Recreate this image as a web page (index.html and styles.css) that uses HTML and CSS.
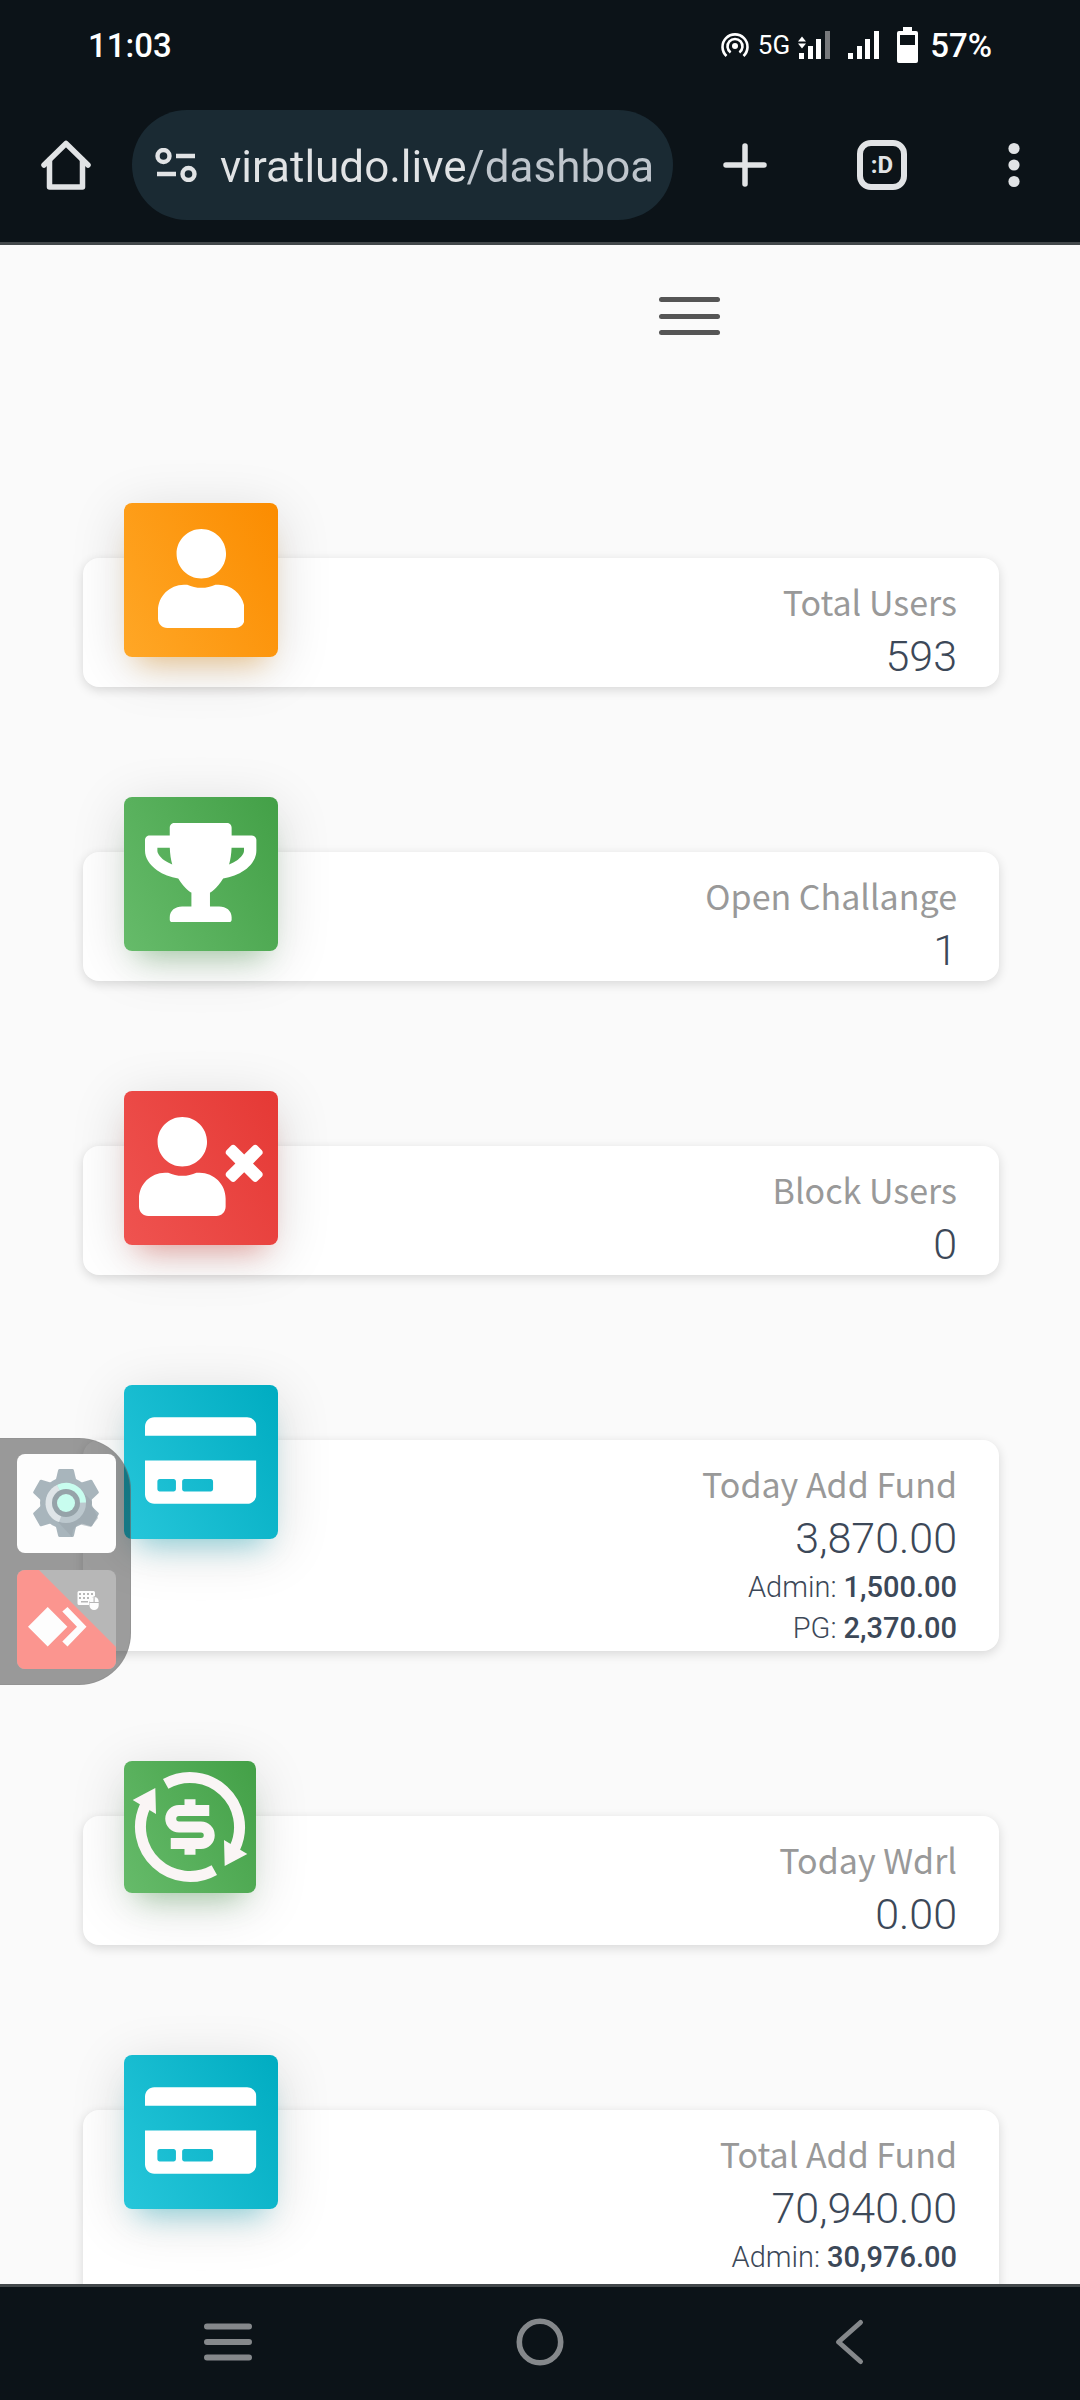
FILE: index.html
```html
<!DOCTYPE html>
<html lang="en">
<head>
<meta charset="utf-8">
<meta name="viewport" content="width=device-width, initial-scale=1">
<title>Dashboard</title>
<link rel="stylesheet" href="styles.css">
</head>
<body>
<svg class="sprite" aria-hidden="true">
  <symbol id="i-card" viewBox="0 0 576 512"><path d="M0 432c0 26.500 21.500 48 48 48h480c26.500 0 48-21.500 48-48V256H0v176zm192-68c0-6.600 5.400-12 12-12h136c6.600 0 12 5.400 12 12v40c0 6.600-5.400 12-12 12H204c-6.600 0-12-5.400-12-12v-40zm-128 0c0-6.600 5.400-12 12-12h72c6.600 0 12 5.400 12 12v40c0 6.600-5.400 12-12 12H76c-6.600 0-12-5.400-12-12v-40zM576 80v48H0V80c0-26.500 21.500-48 48-48h480c26.500 0 48 21.500 48 48z"/></symbol>
</svg>

<header class="status">
  <time class="status-clock">11:03</time>
  <div class="status-icons">
    <svg class="ic-hotspot" viewBox="0 0 28 26" fill="none" stroke="#fff" stroke-width="2.600"><circle cx="14" cy="14" r="3" fill="#fff" stroke="none"/><path d="M9.600 20.500a7.500 7.500 0 1 1 8.800 0M5.500 24a12.500 12.500 0 1 1 17 0"/></svg>
    <span class="status-net">5G</span>
    <svg class="ic-signal-one" viewBox="0 0 32 28" fill="#fff"><path d="M0 10.500l4-5 4 5zM0 12.500h8l-4 5z"/><path d="M1 22h5v6H1zM10 15h5v13h-5zM18 8h5v20h-5z"/><path fill="#77797c" d="M27 0h5v28h-5z"/></svg>
    <svg class="ic-signal-two" viewBox="0 0 31 28" fill="#fff"><path d="M0 22h5v6H0zM9 15h5v13H9zM17 8h5v20h-5zM26 0h5v28h-5z"/></svg>
    <svg class="ic-battery" viewBox="0 0 21 36"><path fill="#fff" fill-rule="evenodd" d="M6 0h9v4h4a2 2 0 0 1 2 2v28a2 2 0 0 1-2 2H2a2 2 0 0 1-2-2V6a2 2 0 0 1 2-2h4zM3 8v10h15V8z"/></svg>
    <span class="status-battery">57%</span>
  </div>
</header>

<nav class="toolbar" aria-label="Browser">
  <button class="tool tool-home" type="button" aria-label="Home">
    <svg viewBox="0 0 50 50" fill="none" stroke="#e1e3e5" stroke-width="5.500" stroke-linecap="round" stroke-linejoin="round"><path d="M3 25L25 3.500L47 25"/><path d="M8.500 20v27h33V20"/></svg>
  </button>
  <div class="omnibox">
    <svg class="ic-site" viewBox="0 0 42 34" fill="none" stroke="#e1e3e5" stroke-width="4.400"><circle cx="8.500" cy="8" r="6"/><path d="M21 8h19M2 26h19"/><circle cx="33.500" cy="26" r="6"/></svg>
    <input class="url" type="text" aria-label="Address" value="viratludo.live/dashboard">
  </div>
  <button class="tool tool-new" type="button" aria-label="New tab">
    <svg viewBox="0 0 50 50" fill="none" stroke="#e1e3e5" stroke-width="5.500" stroke-linecap="round"><path d="M25 6v38M6 25h38"/></svg>
  </button>
  <button class="tool tool-tabs" type="button" aria-label="Tabs"><span class="tab-count">:D</span></button>
  <button class="tool tool-more" type="button" aria-label="More">
    <svg viewBox="0 0 50 50" fill="#e1e3e5"><circle cx="25" cy="8.500" r="5.600"/><circle cx="25" cy="25" r="5.600"/><circle cx="25" cy="41.500" r="5.600"/></svg>
  </button>
</nav>

<main class="page">
  <div class="page-head">
    <button class="burger" type="button" aria-label="Menu"><i></i><i></i><i></i></button>
  </div>
  <div class="cards">
    <section class="card">
      <div class="tile orange"><svg viewBox="0 0 448 512"><path d="M224 256c70.700 0 128-57.300 128-128S294.700 0 224 0 96 57.300 96 128s57.300 128 128 128zm89.600 32h-16.700c-22.200 10.200-46.900 16-72.900 16s-50.600-5.800-72.900-16h-16.700C60.200 288 0 348.200 0 422.400V464c0 26.500 21.500 48 48 48h352c26.500 0 48-21.500 48-48v-41.600c0-74.200-60.200-134.400-134.400-134.400z"/></svg></div>
      <h2 class="label">Total Users</h2>
      <p class="value">593</p>
    </section>
    <section class="card">
      <div class="tile green"><svg viewBox="0 0 576 512"><path d="M552 64H448V24c0-13.300-10.700-24-24-24H152c-13.300 0-24 10.700-24 24v40H24C10.700 64 0 74.700 0 88v56c0 35.700 22.500 72.400 61.900 100.700 31.500 22.700 69.800 37.100 110 41.700C203.300 338.500 240 360 240 360v72h-48c-35.300 0-64 20.700-64 56v12c0 6.600 5.400 12 12 12h296c6.600 0 12-5.400 12-12v-12c0-35.300-28.700-56-64-56h-48v-72s36.700-21.500 68.100-73.600c40.300-4.600 78.600-19 110-41.700 39.300-28.300 61.900-65 61.900-100.700V88c0-13.300-10.700-24-24-24zM99.300 192.800C74.900 175.200 64 155.600 64 144v-16h64.200c1 32.600 5.800 61.200 12.800 86.200-15.100-5.200-29.200-12.400-41.700-21.400zM512 144c0 16.100-17.700 36.100-35.300 48.800-12.500 9-26.700 16.200-41.800 21.400 7-25 11.800-53.600 12.800-86.200H512v16z"/></svg></div>
      <h2 class="label">Open Challange</h2>
      <p class="value">1</p>
    </section>
    <section class="card">
      <div class="tile red"><svg viewBox="0 0 640 512"><path d="M589.600 240l45.600-45.600c6.300-6.300 6.300-16.500 0-22.800l-22.800-22.800c-6.300-6.300-16.500-6.300-22.800 0L544 194.400l-45.600-45.600c-6.300-6.300-16.500-6.300-22.800 0l-22.800 22.800c-6.300 6.300-6.300 16.500 0 22.800l45.600 45.600-45.600 45.600c-6.300 6.300-6.300 16.500 0 22.800l22.800 22.800c6.300 6.300 16.500 6.300 22.800 0l45.600-45.600 45.600 45.600c6.300 6.300 16.500 6.300 22.800 0l22.800-22.800c6.300-6.300 6.300-16.500 0-22.800L589.600 240zM224 256c70.700 0 128-57.300 128-128S294.700 0 224 0 96 57.300 96 128s57.300 128 128 128zm89.600 32h-16.700c-22.200 10.200-46.900 16-72.900 16s-50.600-5.800-72.900-16h-16.700C60.200 288 0 348.200 0 422.400V464c0 26.500 21.500 48 48 48h352c26.500 0 48-21.500 48-48v-41.600c0-74.200-60.200-134.400-134.400-134.400z"/></svg></div>
      <h2 class="label">Block Users</h2>
      <p class="value">0</p>
    </section>
    <section class="card">
      <div class="tile cyan"><svg viewBox="0 0 576 512"><use href="#i-card"/></svg></div>
      <h2 class="label">Today Add Fund</h2>
      <p class="value">3,870.00</p>
      <p class="detail">Admin: <b>1,500.00</b></p>
      <p class="detail">PG: <b>2,370.00</b></p>
    </section>
    <section class="card">
      <div class="tile green small">
        <svg viewBox="0 0 132 132" fill="none" stroke="#faf5f5" stroke-width="11"><path d="M41.700 22.900A49.500 49.500 0 0 1 110.900 86.900M90.300 109.100A49.500 49.500 0 0 1 21.100 45.100"/><path stroke="none" fill="#faf5f5" d="M100 79l23.300 14-22.600 12zM32 53L8.700 39l22.600-12z"/><path d="M85.250 49.500H55a8.250 8.250 0 0 0 0 16.500h22a8.250 8.250 0 0 1 0 16.500H46.750M66 38.300v8M66 86v7.700"/></svg>
      </div>
      <h2 class="label">Today Wdrl</h2>
      <p class="value">0.00</p>
    </section>
    <section class="card card-tall">
      <div class="tile cyan"><svg viewBox="0 0 576 512"><use href="#i-card"/></svg></div>
      <h2 class="label">Total Add Fund</h2>
      <p class="value">70,940.00</p>
      <p class="detail">Admin: <b>30,976.00</b></p>
    </section>
  </div>
</main>

<nav class="sysnav" aria-label="System">
  <button class="sys" type="button" aria-label="Recent apps"><svg viewBox="0 0 48 48" stroke="#85888b" stroke-width="6" stroke-linecap="round"><path d="M3 8.500h42M3 24h42M3 39.500h42"/></svg></button>
  <button class="sys" type="button" aria-label="Home screen"><svg viewBox="0 0 48 48" fill="none" stroke="#85888b" stroke-width="5.600"><circle cx="24" cy="24" r="20.700"/></svg></button>
  <button class="sys" type="button" aria-label="Back"><svg viewBox="0 0 48 48" fill="none" stroke="#85888b" stroke-width="5" stroke-linecap="round" stroke-linejoin="round"><path d="M32.500 4.500L10.500 24l22 19.500"/></svg></button>
</nav>

<aside class="dock" aria-label="Floating apps">
  <button class="app" type="button" aria-label="Settings">
    <svg viewBox="0 0 99 99">
      <rect width="99" height="99" fill="#fdfdfd"/>
      <g fill="#a8b5bc"><circle cx="49" cy="49" r="26"/>
        <path id="tooth" d="M42.500 15h13q1 0 1.300 1L59.500 27v8h-21v-8l2.700-11q.3-1 1.300-1z"/>
        <use href="#tooth" transform="rotate(60 49 49)"/><use href="#tooth" transform="rotate(120 49 49)"/><use href="#tooth" transform="rotate(180 49 49)"/><use href="#tooth" transform="rotate(240 49 49)"/><use href="#tooth" transform="rotate(300 49 49)"/></g>
      <path fill="#9ba7ad" d="M63 35l12 12v4l6 13-7 9-13-3-5 6-1 7-14-15z" opacity=".6"/>
      <circle cx="49" cy="49" r="20" fill="#bcc8ce"/>
      <path fill="#dfe5e8" d="M49 49L42 68A20 20 0 0 1 40 31z"/>
      <path fill="#c8fdef" d="M49 49L40 31A20 20 0 0 1 69 48.500z"/>
      <circle cx="49" cy="49" r="14" fill="#96a3a9"/>
      <circle cx="49" cy="49" r="9" fill="#c8fdef"/>
    </svg>
  </button>
  <button class="app" type="button" aria-label="Remote control">
    <svg viewBox="0 0 99 99">
      <rect width="99" height="99" fill="#b7b7b7"/>
      <path fill="#fb958f" d="M0 0h22l77 77v22H0z"/>
      <path fill="#fdfdfd" d="M30.700 37l19.700 19.700-19.700 19.700L11 56.700zM50.500 37l19 19.700-19 19.800-5.200-5L60 56.700 45.300 41.500z"/>
      <path fill="#fdfdfd" fill-rule="evenodd" d="M62 21h14.500a1.500 1.500 0 0 1 1.500 1.500V26q-6 2-6 9H62a1.500 1.500 0 0 1-1.500-1.500v-11A1.500 1.500 0 0 1 62 21zM62 23v2h2v-2zm4 0v2h2v-2zm4 0v2h2v-2zm4 0v2h2v-2zM62 27v2h2v-2zm4 0v2h2v-2zm4 0v2h2v-2zM64 31v1.500h7V31z"/>
      <path fill="#fdfdfd" d="M76.500 27v5h-4q0-4.500 4-5zM77.700 27v5h4q0-4.500-4-5zM72.500 33h9.200v2.500a4.600 4.600 0 0 1-9.200 0z"/>
    </svg>
  </button>
</aside>
</body>
</html>
```
FILE: styles.css
```css
* { box-sizing: border-box; }

body {
  margin: 0;
  height: 100vh;
  display: flex;
  flex-direction: column;
  overflow: hidden;
  background: #fafafa;
  color: #3c4858;
  font-family: Roboto, "Noto Sans", sans-serif;
}

button {
  margin: 0;
  padding: 0;
  border: 0;
  background: none;
  color: inherit;
  font: inherit;
}

svg { display: block; }
.sprite { position: absolute; width: 0; height: 0; }

/* Status bar */
.status {
  flex: none;
  display: flex;
  align-items: center;
  justify-content: space-between;
  height: 90px;
  padding: 0 88px;
  background: #0c1318;
  color: #fff;
  font-size: 33px;
  font-weight: 500;
}
.status-icons { display: flex; align-items: center; }
.status-net { margin: 0 8px 0 9px; font-size: 26px; font-weight: 400; }
.ic-hotspot { width: 28px; height: 26px; }
.ic-signal-one { width: 32px; height: 28px; margin-right: 18px; }
.ic-signal-two { width: 31px; height: 28px; margin-right: 18px; }
.ic-battery { width: 21px; height: 36px; margin-right: 12px; }

/* Browser toolbar */
.toolbar {
  flex: none;
  display: flex;
  align-items: center;
  padding: 20px 0 22px;
  background: #0c1318;
  border-bottom: 3px solid #43484b;
}
.tool { display: grid; place-items: center; height: 110px; }
.tool svg { width: 50px; height: 50px; }
.tool-home { width: 132px; }
.tool-new { width: 144px; }
.tool-tabs { width: 130px; }
.tool-more { width: 133px; }
.tab-count {
  width: 50px;
  height: 50px;
  border: 6px solid #e1e3e5;
  border-radius: 14px;
  color: #e1e3e5;
  font-size: 24px;
  font-weight: 700;
  line-height: 38px;
  text-align: center;
}
.omnibox {
  flex: 1;
  min-width: 0;
  display: flex;
  align-items: center;
  gap: 23px;
  height: 110px;
  padding: 0 22px 0 23px;
  border-radius: 55px;
  background: #1a2a33;
}
.ic-site { flex: none; width: 42px; height: 34px; }
.url {
  flex: 1;
  min-width: 0;
  padding: 4px 0 0;
  border: 0;
  outline: 0;
  background: linear-gradient(90deg, #e1e3e5 247px, #bfc6cd 247px);
  background-clip: text;
  -webkit-background-clip: text;
  color: transparent;
  font: 400 44px/60px Roboto, "Noto Sans", sans-serif;
}

/* Dashboard */
.page { flex: 1; min-height: 0; overflow: hidden; }
.page-head {
  display: flex;
  justify-content: flex-end;
  padding: 52px calc(100% / 3) 0 0;
}
.burger {
  display: flex;
  flex-direction: column;
  justify-content: space-between;
  width: 61px;
  height: 38px;
}
.burger i { height: 5px; border-radius: 3px; background: #555; }
.cards {
  display: grid;
  gap: 165px;
  padding: 223px 81px 0 83px;
}
.card {
  position: relative;
  padding: 15px 42px 2px;
  border-radius: 16px;
  background: #fff;
  box-shadow: 0 3px 11px rgba(0, 0, 0, .14);
  text-align: right;
}
.card-tall { min-height: 211px; }
.tile {
  position: absolute;
  top: -55px;
  left: 41px;
  display: grid;
  place-items: center;
  width: 154px;
  height: 154px;
  padding-bottom: 3px;
  border-radius: 8px;
}
.tile svg { height: 99px; fill: #fff; }
.tile.small { width: 132px; height: 132px; padding: 0; }
.tile.small svg { height: 132px; fill: none; }
.orange {
  background: linear-gradient(60deg, #ffa726, #fb8c00);
  box-shadow: 0 11px 55px rgba(0, 0, 0, .14), 0 19px 27px -14px rgba(255, 152, 0, .4);
}
.green {
  background: linear-gradient(60deg, #66bb6a, #43a047);
  box-shadow: 0 11px 55px rgba(0, 0, 0, .14), 0 19px 27px -14px rgba(76, 175, 80, .4);
}
.red {
  background: linear-gradient(60deg, #ef5350, #e53935);
  box-shadow: 0 11px 55px rgba(0, 0, 0, .14), 0 19px 27px -14px rgba(244, 67, 54, .4);
}
.cyan {
  background: linear-gradient(60deg, #26c6da, #00acc1);
  box-shadow: 0 11px 55px rgba(0, 0, 0, .14), 0 19px 27px -14px rgba(0, 188, 212, .4);
}
.label {
  margin: 0;
  color: #999;
  font: 400 34px/57px "Noto Sans CJK SC", sans-serif;
}
.value { margin: 0 0 3px; font-size: 43px; font-weight: 300; line-height: 52px; }
.detail { margin: 0; font-size: 29px; font-weight: 300; line-height: 41px; }
.detail b { font-weight: 500; }

/* System navigation */
.sysnav {
  flex: none;
  display: flex;
  justify-content: center;
  height: 116px;
  padding-bottom: 3px;
  border-top: 3px solid #43484b;
  background: #0c1318;
}
.sys { display: grid; place-items: center; width: 312px; }
.sys svg { width: 48px; height: 48px; }

/* Floating app dock */
.dock {
  position: fixed;
  top: 65%;
  left: 0;
  display: flex;
  flex-direction: column;
  gap: 17px;
  margin-top: -122px;
  padding: 15px 14px 15px 17px;
  border: 1px solid rgba(140, 140, 140, .5);
  border-left: 0;
  border-radius: 0 52px 52px 0;
  background: rgba(0, 0, 0, .39);
}
.app { overflow: hidden; width: 99px; height: 99px; border-radius: 8px; }
```
